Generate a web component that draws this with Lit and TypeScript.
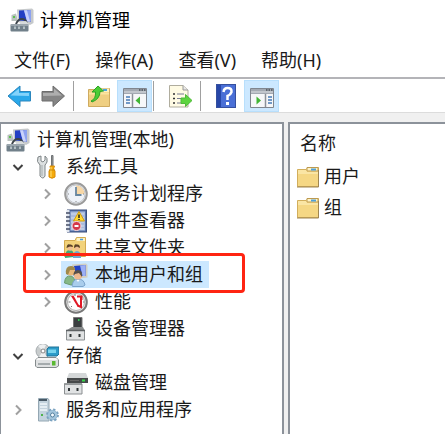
import { LitElement, html, svg, css, nothing, TemplateResult } from "lit";
import { customElement, property } from "lit/decorators.js";
import { classMap } from "lit/directives/class-map.js";

// 24 x 24 drawings used by the title bar, the toolbar, the tree and the list.
const icons: Record<string, TemplateResult> = {
  computer: svg`
    <path d="M7 1.500 22 0.500 23.500 2V15L20 17 8 14Z" fill="#c6c9cb"/>
    <path d="M9 2.500 21 2V13.500L9 12.500Z" fill="#2440c4"/>
    <path d="M14 2.300 21 2V13.500L17 13.200Z" fill="#8da2f0"/>
    <path d="M14 2.300 17 2.200 20 13.400 17 13.200Z" fill="#c9d2fa"/>
    <path d="M1.500 7 6 5.500 8 13H1.500Z" fill="#b9c1be"/>
    <rect x="3" y="8" width="2" height="2" fill="#5cc14e"/>
    <path d="M6 16Q8 11 12 11T17 16" fill="none" stroke="#3c444b" stroke-width="2"/>
    <path d="M10 14 16 13 20 17H10Z" fill="#d7dbdc"/>
    <rect x="0.500" y="16" width="18" height="7.500" rx="1" fill="#71808a"/>
    <path d="M1 17H18" stroke="#a8b2b8" stroke-width="1.500"/>
    <path d="M5 18.500V21M9 18.500V21M14 18.500V21" stroke="#c8d2d6" stroke-width="1.500"/>`,
  tools: svg`
    <path d="M3 2 6 1V6L8 7 10 5V1Q13 3 12 7Q11 9 10 10V21Q8 25 5 21V10Q1 7 3 2Z" fill="#dce0e1" stroke="#7f8587"/>
    <path d="M7 10V21" stroke="#a5adaf"/>
    <path d="M16.500 0.500H18V12H16.500Z" fill="#999" stroke="#6f7375"/>
    <path d="M15 11H19.500L18.500 14 20 16V22Q17 24.500 14 22V16L15.500 14Z" fill="#f5ab0b" stroke="#d98c08"/>
    <path d="M16 12V22" stroke="#ffe07a"/>
    <path d="M14 15H20" stroke="#c98609"/>`,
  clock: svg`
    <circle cx="12" cy="12" r="10.800" fill="#e4e4e4" stroke="#9a9a9a" stroke-width="2"/>
    <circle cx="12" cy="12" r="9" fill="#eef2f8" stroke="#c2c6cc"/>
    <path d="M12 12V3.500A8.500 8.500 0 0 1 20.500 12Z" fill="#f7d7a6"/>
    <path d="M12 5V13H17.500" fill="none" stroke="#66869f" stroke-width="1.800"/>
    <path d="M4 12H5M12 19V20M19 12H20" stroke="#888"/>`,
  events: svg`
    <rect x="3.500" y="1" width="19" height="22" fill="#5874ac" stroke="#3b4f7d"/>
    <path d="M6.500 2.500H21V21.500H6.500Z" fill="#a9bbdc"/>
    <path d="M7 5H20M7 9H20M7 13H20M7 17H20M7 20H20" stroke="#d3dcee"/>
    <path d="M4 1V23" stroke="#dfe4ed" stroke-width="3"/>
    <path d="M2 4H6M2 8H6M2 12H6M2 16H6M2 20H6" stroke="#444c66" stroke-width="1.500"/>
    <path d="M15 2.500 20.500 12H9.500Z" fill="#ffd830" stroke="#d19b10"/>
    <path d="M15 5.500V9M15 10V11" stroke="#222" stroke-width="1.500"/>
    <circle cx="12.500" cy="17" r="4.500" fill="#d4384a" stroke="#f6dfe3"/>
    <path d="M10.500 17H14.500" stroke="#fff" stroke-width="2"/>`,
  shared: svg`
    <path d="M0.500 4.500H11L12.500 1.500H21.500V20.500H0.500Z" fill="#f2d27a" stroke="#d3aa50"/>
    <path d="M13 2H21V5H12.500Z" fill="#fdf2c1"/>
    <path d="M16 3.500H19" stroke="#4c9bd8" stroke-width="1.500"/>
    <path d="M1 20Q2 13 6 14Q10 14 10 21L1 22Z" fill="#41a57a"/>
    <path d="M9 22Q9 15 13 15Q17 15 17 22Z" fill="#6fa9cf"/>
    <circle cx="6" cy="12" r="2.700" fill="#efc091"/>
    <circle cx="13" cy="12" r="2.700" fill="#efc091"/>
    <path d="M2.500 12Q3 7 6 8.500Q9 8 9 11L6 10.500ZM10 12Q10 7 13 8.500Q16 8 16 12L13 10.500Z" fill="#5b4328"/>`,
  users: svg`
    <path d="M8 1.500 22 0.500 23.500 2V14.500L11 16Z" fill="#d2d0c2"/>
    <path d="M10 3 21.500 2V13L12 13Z" fill="#2343c5"/>
    <path d="M16 2.500 21.500 2V13L18.500 13Z" fill="#9cb0f6"/>
    <path d="M0.500 20Q1 12 7 13Q11 14 11 21L7 22Z" fill="#85b887" stroke="#6a9a70"/>
    <circle cx="7" cy="8.500" r="4" fill="#e8b779"/>
    <path d="M2 11Q1 3 7 3Q11 3 11 7L6 7 4 12Z" fill="#a08a4c"/>
    <path d="M8 23Q9 16 14 16Q20 16 21 22L19 23.500H9Z" fill="#a9cdec" stroke="#7ba4cb"/>
    <circle cx="14" cy="12.500" r="4" fill="#eeb98e"/>
    <path d="M9.500 13Q9 7 14 7Q19 7 18 14L15 10 11 11Z" fill="#55504a"/>
    <path d="M12.500 17 14 19 15.500 17" fill="#fff"/>`,
  gauge: svg`
    <circle cx="12" cy="12" r="10.800" fill="#e5e5e5" stroke="#777" stroke-width="2"/>
    <circle cx="12" cy="12" r="8.500" fill="#fff" stroke="#b0b0b0"/>
    <path d="M7 6 9.500 5.500 15 15.500 13.500 16.500Z" fill="#e01825"/>
    <path d="M13 6.500H17.500V10M17 7V17L13.500 15.500" fill="none" stroke="#e01825" stroke-width="2"/>
    <path d="M4.500 12H6.500M7 17 8 16M11 4V6M19 12H20" stroke="#777"/>`,
  device: svg`
    <path d="M9.500 0.500H18V11H9.500Z" fill="#3b3f41" stroke="#777"/>
    <rect x="14" y="2" width="1.500" height="2" fill="#35cc55"/>
    <path d="M3 13 8 10H19L21 14H2Z" fill="#888b8c"/>
    <path d="M2.500 13.500H20.500V23H2.500Z" fill="#e0e2e3" stroke="#8b8f91"/>
    <path d="M2 13.500H21" stroke="#5e6264" stroke-width="1.500"/>
    <path d="M6.500 17V20M15.500 17V20" stroke="#303638" stroke-width="2"/>`,
  storage: svg`
    <circle cx="8" cy="7" r="7" fill="#c8cccd" stroke="#a4aaad"/>
    <path d="M8 7 3 2Q7-1 11 1ZM8 7 4 13Q8 15 12 13Z" fill="#eef0f1"/>
    <circle cx="8" cy="7" r="2" fill="#fff" stroke="#888"/>
    <path d="M12 5 14 3H24V10L22 12H12Z" fill="#2c9cc9" stroke="#207397"/>
    <path d="M13 5.500H21V9H13Z" fill="#79d5ee"/>
    <path d="M3 13.500H21L23.500 16V22L21 23.500H2L0.500 22V16Z" fill="#dfe1e2" stroke="#858b8d"/>
    <path d="M3 14H21L23 16H1Z" fill="#f7f7f7"/>
    <path d="M3 20H15" stroke="#92999b" stroke-width="1.500"/>
    <rect x="17" y="17" width="3.500" height="4.500" fill="#5ab932"/>`,
  disk: svg`
    <path d="M5 2H22L24 7H3Z" fill="#d4d7d8"/>
    <path d="M3 7H24V12H3Z" fill="#46494a"/>
    <path d="M6 9.500H15" stroke="#666"/>
    <rect x="18" y="8.500" width="3" height="2" fill="#36d64a"/>
    <path d="M0.500 13H18V23H0.500Z" fill="#e0e2e3" stroke="#8b8f91"/>
    <path d="M0 13H18" stroke="#8a8f91" stroke-width="1.500"/>
    <path d="M5 17V20M13.500 17V20" stroke="#303638" stroke-width="2"/>`,
  services: svg`
    <path d="M3.500 0.500H13L14 2V23H3.500Z" fill="#c3d3dd" stroke="#94a7b3"/>
    <path d="M4 1H12V3H4Z" fill="#485965"/>
    <path d="M5 6H12M5 9H12M5 12H12" stroke="#f1f7fa" stroke-width="1.500"/>
    <rect x="6" y="16" width="2" height="2" fill="#4eb34b"/>
    <circle cx="17.500" cy="17" r="5.200" fill="#91b5cf" stroke="#7aa2c0" stroke-width="2.500" stroke-dasharray="2.200 1.880"/>
    <circle cx="17.500" cy="17" r="4.700" fill="#a3c5dc"/>
    <circle cx="17.500" cy="17" r="2" fill="#f5fbff" stroke="#55809e"/>`,
  folder: svg`
    <path d="M1.500 4.500H10L12 2.500H22.500V21.500H1.500Z" fill="#f5d784" stroke="#d2ae5b"/>
    <path d="M2 5H10L11 7H22V9H2Z" fill="#fae5a4"/>
    <path d="M11 2.500H22V6H11Z" fill="#fff3c5" stroke="#bd9a50"/>
    <path d="M15 4.500H20" stroke="#4fa0d8" stroke-width="2"/>
    <path d="M1 22H22.500V5" fill="none" stroke="#9f8550"/>`,
  back: svg`
    <path d="M1 12 13 2V7.500H23.500V17H13V22.500Z" fill="#29a8ea" stroke="#2b86bd"/>
    <path d="M3.500 11.500 12 4.500V9H22V12Z" fill="#83d3fb"/>`,
  forward: svg`
    <path d="M23.500 12 12 2V7.500H1V17H12V22.500Z" fill="#858585" stroke="#6c6c6c"/>
    <path d="M21 11.500 13 4.500V9H2V12Z" fill="#aeaeae"/>`,
  up: svg`
    <path d="M1.500 5.500H10L12 4.500H22.500V22.500H1.500Z" fill="#efcf82" stroke="#cfab60"/>
    <path d="M12 4.500H22V8H11Z" fill="#fff0bd"/>
    <path d="M16 6H20" stroke="#4ba3db" stroke-width="2"/>
    <path d="M2 9.500H22" stroke="#fbe4a1" stroke-width="2"/>
    <path d="M4 17Q9 15 8.500 8L5 8 11 2 16.500 7 13 7.500Q13 15 5 18Z" fill="#4ccc35" stroke="#2ea326"/>`,
  tree: svg`
    <path d="M0.500 4.500H23.500V23.500H0.500Z" fill="#f6f7f9" stroke="#80868f"/>
    <path d="M1 5H23V10H1Z" fill="#a3a9b2"/>
    <path d="M1 8H23" stroke="#dfe2e6"/>
    <path d="M16 6H17.500M18.500 6H20M21 6H22.500" stroke="#4a5058" stroke-width="1.500"/>
    <path d="M9.500 10V23" stroke="#8c9199" stroke-width="1.500"/>
    <path d="M3 13H7M3 16H7M3 19H7" stroke="#467bb6" stroke-width="1.500"/>
    <path d="M17 12.500V20.500L12.500 16.500Z" fill="#42b534"/>`,
  panel: svg`
    <path d="M0.500 4.500H23.500V23.500H0.500Z" fill="#f6f7f9" stroke="#80868f"/>
    <path d="M1 5H23V10H1Z" fill="#a3a9b2"/>
    <path d="M1 8H23" stroke="#dfe2e6"/>
    <path d="M16 6H17.500M18.500 6H20M21 6H22.500" stroke="#4a5058" stroke-width="1.500"/>
    <path d="M15.500 10V23" stroke="#8c9199" stroke-width="1.500"/>
    <path d="M18 13H22M18 16H22M18 19H22" stroke="#467bb6" stroke-width="1.500"/>
    <path d="M6.500 12.500V20.500L11 16.500Z" fill="#42b534"/>`,
  exportList: svg`
    <path d="M1.500 1.500H15L20 6V23H1.500Z" fill="#fffbe4" stroke="#b0ad9e"/>
    <path d="M15 1.500V6H20" fill="#e8e8e8" stroke="#9a9a9a"/>
    <path d="M5 10H7M5 14.500H7M5 19H7" stroke="#333" stroke-width="1.500"/>
    <path d="M9 10H16M9 14.500H13M9 19H13" stroke="#777b92"/>
    <path d="M13 14H17.500V10.500L24 16.500 17.500 22.500V19.500H13Z" fill="#5dd43e" stroke="#4fb93a"/>`,
  help: svg`
    <rect x="2.500" y="0.500" width="19" height="23" fill="#4a6fd6" stroke="#35509f"/>
    <path d="M3 1H7V23H3Z" fill="#2747a8"/>
    <path d="M9.500 8Q10 4 13.500 4Q18 4 17.500 8Q16.500 11 13.500 12V16" fill="none" stroke="#fff" stroke-width="2.500"/>
    <rect x="12" y="18" width="3" height="3" fill="#fff"/>`,
};

const icon = (name: string) =>
  html`<svg class="icon" viewBox="0 0 24 24" aria-hidden="true">${icons[name]}</svg>`;

interface TreeNode {
  label: string;
  icon: string;
  state?: "open" | "closed";
  selected?: boolean;
  children?: TreeNode[];
}

const tree: TreeNode = {
  label: "计算机管理(本地)",
  icon: "computer",
  children: [
    {
      label: "系统工具",
      icon: "tools",
      state: "open",
      children: [
        { label: "任务计划程序", icon: "clock", state: "closed" },
        { label: "事件查看器", icon: "events", state: "closed" },
        { label: "共享文件夹", icon: "shared", state: "closed" },
        { label: "本地用户和组", icon: "users", state: "closed", selected: true },
        { label: "性能", icon: "gauge", state: "closed" },
        { label: "设备管理器", icon: "device" },
      ],
    },
    {
      label: "存储",
      icon: "storage",
      state: "open",
      children: [{ label: "磁盘管理", icon: "disk" }],
    },
    { label: "服务和应用程序", icon: "services", state: "closed" },
  ],
};

const shared = css`
  * { box-sizing: border-box; }
  ul { list-style: none; margin: 0; padding: 0; }
  button {
    margin: 0;
    padding: 0;
    border: 0;
    background: none;
    color: inherit;
    font: inherit;
    white-space: nowrap;
  }
  .icon { display: block; flex: none; width: 24px; height: 24px; }
`;

@customElement("console-tree")
class ConsoleTree extends LitElement {
  @property({ attribute: false }) root!: TreeNode;

  static styles = [
    shared,
    css`
      :host { display: block; }
      .row { position: relative; display: flex; align-items: center; height: 27px; }
      .branch { padding-left: 29px; }
      .first { padding-left: 1px; }
      .toggle, .blank { flex: none; width: 28px; height: 27px; }
      .toggle { display: grid; place-items: center; }
      .chevron { width: 12px; height: 12px; fill: none; stroke: #a0a0a0; stroke-width: 2; }
      .open .chevron { stroke: #404040; }
      .label { display: flex; align-items: center; gap: 7px; height: 27px; padding: 0 6px 0 3px; }
      .selected .label { background: #cce8ff; }
      .mark {
        position: absolute;
        z-index: 1;
        top: -8px;
        bottom: -5px;
        left: -10px;
        width: 222px;
        border: 3px solid #ff2412;
        border-radius: 4px;
        pointer-events: none;
      }
    `,
  ];

  private node(n: TreeNode, depth: number): TemplateResult {
    const toggle = n.state
      ? html`<button class="toggle ${n.state}" aria-label=${n.state === "open" ? "折叠" : "展开"}>
          <svg class="chevron" viewBox="0 0 12 12" aria-hidden="true">
            <path d=${n.state === "open" ? "M1.500 4 6 8.500 10.500 4" : "M4 1.500 8.500 6 4 10.500"} />
          </svg>
        </button>`
      : html`<span class="blank"></span>`;
    return html`<li>
      <div class=${classMap({ row: true, selected: !!n.selected })}>
        ${depth ? toggle : nothing}
        <button class="label">${icon(n.icon)}<span>${n.label}</span></button>
        ${n.selected ? html`<span class="mark"></span>` : nothing}
      </div>
      ${n.children
        ? html`<ul class="branch ${depth ? "" : "first"}">
            ${n.children.map((c) => this.node(c, depth + 1))}
          </ul>`
        : nothing}
    </li>`;
  }

  render() {
    return html`<ul>${this.node(this.root, 0)}</ul>`;
  }
}

@customElement("app-root")
class AppRoot extends LitElement {
  static styles = [
    shared,
    css`
      :host {
        display: flex;
        flex-direction: column;
        min-height: 100vh;
        overflow: hidden;
        background: #f0f0f0;
        color: #1a1a1a;
        font: 18px/27px "Noto Sans", "Noto Sans CJK SC", sans-serif;
      }
      .title {
        display: flex;
        align-items: center;
        gap: 6px;
        height: 40px;
        padding-left: 10px;
        background: #fff;
      }
      .title h1 { margin: 0; font: inherit; color: #000; }
      .menu {
        display: flex;
        align-items: center;
        gap: 25px;
        height: 39px;
        padding: 4px 14px 0;
        border-bottom: 2px solid #b4b4b8;
        background: #fff;
      }
      .tools {
        display: flex;
        align-items: center;
        height: 34px;
        padding-left: 2px;
        border-bottom: 1px solid #dcdcdc;
        background: #fff;
      }
      .tool { display: grid; place-items: center; width: 34px; height: 32px; }
      .pressed { width: 35px; margin-left: 1px; background: #cce8ff; border: 1px solid #b8dffc; }
      .divider { width: 1px; height: 30px; margin: 0 8px 0 3px; background: #a0a0a0; }
      .pressed + .divider { margin: 0 9px 0 1px; }
      .panes {
        display: grid;
        grid-template-columns: 284px 1fr;
        gap: 4px;
        flex: 1;
        margin-top: 9px;
      }
      .pane { border: 2px solid #8c929a; border-bottom: 0; background: #fff; }
      .nav { padding: 2px 0 10px 2px; border-left-width: 1px; }
      .list { border-right: 0; padding-left: 6px; }
      table { width: 100%; border-collapse: collapse; }
      th, td { padding: 0; text-align: left; font-weight: 400; }
      th { height: 37px; padding: 1px 0 0 4px; }
      td { height: 31px; }
      .entry { display: flex; align-items: center; gap: 4px; }
    `,
  ];

  private tool(name: string, label: string, extra = "") {
    return html`<button class="tool ${extra}" aria-label=${label}>${icon(name)}</button>`;
  }

  render() {
    return html`
      <header class="title">${icon("computer")}<h1>计算机管理</h1></header>
      <nav class="menu">
        ${["文件(F)", "操作(A)", "查看(V)", "帮助(H)"].map((m) => html`<button>${m}</button>`)}
      </nav>
      <div class="tools" role="toolbar">
        ${this.tool("back", "后退")} ${this.tool("forward", "前进")}
        <span class="divider"></span>
        ${this.tool("up", "上移一级")} ${this.tool("tree", "显示/隐藏控制台树", "pressed")}
        <span class="divider"></span>
        ${this.tool("exportList", "导出列表")}
        <span class="divider"></span>
        ${this.tool("help", "帮助")} ${this.tool("panel", "显示/隐藏操作窗格", "pressed")}
      </div>
      <main class="panes">
        <section class="pane nav"><console-tree .root=${tree}></console-tree></section>
        <section class="pane list">
          <table>
            <thead><tr><th scope="col">名称</th></tr></thead>
            <tbody>
              ${["用户", "组"].map(
                (name) => html`<tr><td><span class="entry">${icon("folder")}${name}</span></td></tr>`
              )}
            </tbody>
          </table>
        </section>
      </main>
    `;
  }
}
